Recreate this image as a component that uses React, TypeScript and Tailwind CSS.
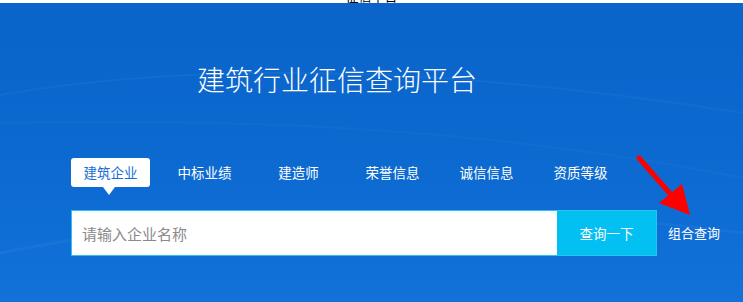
import React, { useState } from "react";

const tabs = ["建筑企业", "中标业绩", "建造师", "荣誉信息", "诚信信息", "资质等级"];

export default function App() {
  const [active, setActive] = useState(0);
  const [keyword, setKeyword] = useState("");

  return (
    <div
      className="w-[743px] h-[302px] overflow-hidden bg-white"
      style={{ fontFamily: '"Noto Sans CJK SC", "Noto Sans", sans-serif' }}
    >
      {/* bottom edge of the previous line, cut off */}
      <div className="h-[3px] overflow-hidden flex justify-center">
        <span className="-mt-[11px] text-[13px] leading-[14px] text-black">征信平台</span>
      </div>

      <div className="relative h-[299px] bg-gradient-to-b from-[#0a64c9] via-[#0b69d0] to-[#1272da]">
        {/* faint light streaks */}
        <svg className="absolute inset-0 pointer-events-none" width="743" height="299">
          <path d="M0 92 Q 300 40 743 110" stroke="#ffffff" strokeOpacity="0.04" strokeWidth="2" fill="none" />
          <path d="M0 250 Q 360 180 743 230" stroke="#ffffff" strokeOpacity="0.04" strokeWidth="3" fill="none" />
          <path d="M0 120 Q 420 110 743 175" stroke="#ffffff" strokeOpacity="0.03" strokeWidth="2" fill="none" />
        </svg>

        <div className="relative flex flex-col">
          <h1 className="mt-[56px] ml-[197px] text-[28px] leading-[40px] font-light text-white">
            建筑行业征信查询平台
          </h1>

          <div className="mt-[59px] ml-[71px] flex gap-[15px]">
            {tabs.map((t, i) => (
              <button
                key={t}
                onClick={() => setActive(i)}
                className={
                  i === active
                    ? "relative w-[79px] h-[29px] rounded-[3px] bg-white text-[#1b6fd3] text-[13.5px] leading-[29px]"
                    : "relative w-[79px] h-[29px] text-white text-[13.5px] leading-[29px]"
                }
              >
                {t}
                {i === active && (
                  <span className="absolute left-[32px] top-[29px] w-0 h-0 border-l-[6px] border-r-[6px] border-t-[8px] border-l-transparent border-r-transparent border-t-white" />
                )}
              </button>
            ))}
          </div>

          <div className="mt-[23px] ml-[71px] flex items-center">
            <div className="flex w-[586px] h-[46px] border border-[#2bc4f2]">
              <input
                value={keyword}
                onChange={(e) => setKeyword(e.target.value)}
                placeholder="请输入企业名称"
                className="flex-1 h-full bg-white px-[10px] text-[15px] text-gray-700 placeholder:text-[#8a8a8a] outline-none"
              />
              <button className="w-[99px] h-full bg-[#02c0f2] text-white text-[13.5px]">查询一下</button>
            </div>
            <span className="ml-[11px] text-white text-[13px]">组合查询</span>
          </div>
        </div>

        {/* red arrow pointing at 组合查询 */}
        <svg className="absolute left-[630px] top-[150px]" width="70" height="70">
          <line x1="9" y1="5" x2="43" y2="44" stroke="#f00" strokeWidth="5" strokeLinecap="round" />
          <polygon points="29,50 52,31 60,62" fill="#f00" />
        </svg>
      </div>
    </div>
  );
}
